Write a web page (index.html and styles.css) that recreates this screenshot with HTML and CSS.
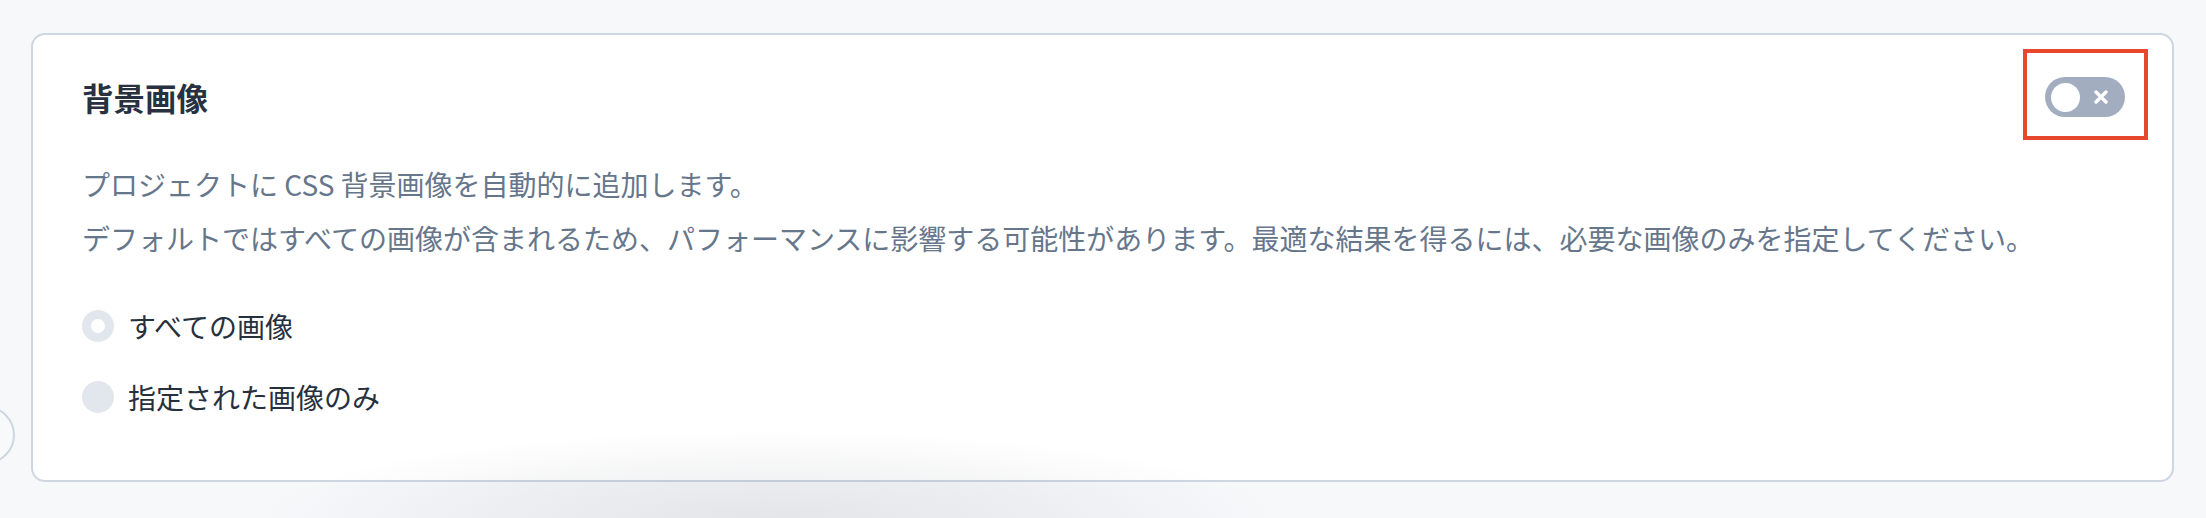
FILE: index.html
```html
<!DOCTYPE html>
<html lang="ja">
<head>
<meta charset="utf-8">
<title>背景画像</title>
<link rel="stylesheet" href="styles.css">
</head>
<body>
<div class="page">
  <section class="card">
    <header class="card-head">
      <h2 class="title">背景画像</h2>
      <div class="toggle-wrap">
        <button class="toggle" type="button" aria-pressed="false">
          <span class="knob"></span>
          <svg class="toggle-x" viewBox="0 0 14 14" width="14" height="14" aria-hidden="true">
            <path d="M2 2 L12 12 M12 2 L2 12" stroke="#ffffff" stroke-width="3.4" stroke-linecap="round" fill="none"/>
          </svg>
        </button>
        <span class="highlight"></span>
      </div>
    </header>
    <p class="desc first">プロジェクトに CSS 背景画像を自動的に追加します。</p>
    <p class="desc">デフォルトではすべての画像が含まれるため、パフォーマンスに影響する可能性があります。最適な結果を得るには、必要な画像のみを指定してください。</p>
    <div class="options">
      <label class="option"><span class="radio radio-ring"></span><span class="option-label">すべての画像</span></label>
      <label class="option"><span class="radio radio-fill"></span><span class="option-label">指定された画像のみ</span></label>
    </div>
  </section>
</div>
<div class="edge-circle"></div>
<div class="bottom-shadow"></div>
</body>
</html>
```

FILE: styles.css
```css
html, body {
  margin: 0;
  padding: 0;
}
body {
  background: #f7f8fa;
  font-family: "Noto Sans CJK JP", "Noto Sans", sans-serif;
  height: 518px;
  overflow: hidden;
  position: relative;
}
.page {
  padding: 33px 32px 0 31px;
}
.card {
  box-sizing: border-box;
  height: 449px;
  background: #ffffff;
  border: 2px solid #cdd6e1;
  border-radius: 14px;
  padding: 42px 47px 0 49px;
}
.card-head {
  display: flex;
  justify-content: space-between;
  align-items: center;
  height: 40px;
}
.title {
  margin: 0;
  font-size: 31.5px;
  line-height: 40px;
  font-weight: 700;
  color: #283140;
}
.toggle-wrap {
  position: relative;
  display: flex;
}
.toggle {
  width: 80px;
  height: 40px;
  border: none;
  border-radius: 20px;
  background: #a2aebf;
  padding: 0 17px 0 6px;
  display: flex;
  align-items: center;
  justify-content: space-between;
  box-sizing: border-box;
}
.knob {
  width: 29px;
  height: 29px;
  border-radius: 50%;
  background: #ffffff;
}
.toggle-x {
  display: block;
}
.highlight {
  position: absolute;
  top: -28px;
  left: -22px;
  right: -23px;
  bottom: -23px;
  border: 4px solid #e6472d;
  pointer-events: none;
}
.desc {
  margin: 12px 0 0;
  font-size: 28px;
  line-height: 42px;
  color: #66768b;
}
.desc.first {
  margin-top: 46px;
}
.options {
  margin-top: 46px;
  display: flex;
  flex-direction: column;
  gap: 29px;
}
.option {
  display: flex;
  align-items: center;
  gap: 14px;
  height: 42px;
}
.radio {
  box-sizing: border-box;
  width: 32px;
  height: 32px;
  border-radius: 50%;
  flex: none;
}
.radio-ring {
  border: 9px solid #e2e7ee;
  background: #ffffff;
}
.radio-fill {
  background: #e2e7ee;
}
.option-label {
  font-size: 28px;
  line-height: 42px;
  color: #27303d;
}
.edge-circle {
  position: absolute;
  left: -43px;
  top: 406px;
  width: 54px;
  height: 54px;
  border: 2px solid #cdd6e1;
  border-radius: 50%;
  background: #f8f9fb;
}
.bottom-shadow {
  position: absolute;
  left: 260px;
  top: 430px;
  width: 1020px;
  height: 88px;
  pointer-events: none;
  background: radial-gradient(ellipse 50% 100% at 50% 100%, rgba(30, 40, 60, 0.09) 0%, rgba(30, 40, 60, 0.05) 50%, rgba(30, 40, 60, 0) 100%);
}
```
